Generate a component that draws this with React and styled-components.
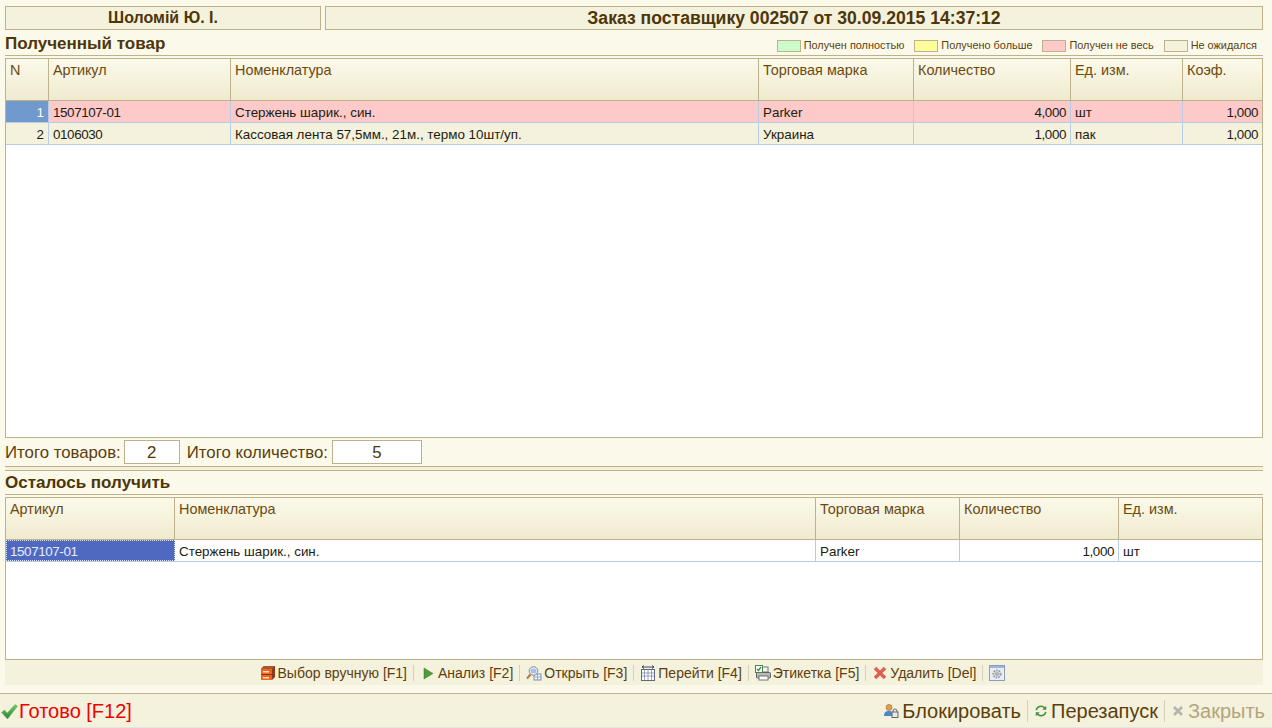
import styled, { createGlobalStyle } from 'styled-components';
import { Fragment } from 'react';

const GlobalStyle = createGlobalStyle`
    html, body {
        margin: 0;
        padding: 0;
        overflow: hidden;
        background: #fbf9ea;
    }
    * {
        box-sizing: border-box;
    }
`;

const receivedColumns = '43px 182px 528px 155px 157px 112px 1fr';
const leftColumns = '169px 641px 144px 159px 1fr';

const receivedHead = ['N', 'Артикул', 'Номенклатура', 'Торговая марка', 'Количество', 'Ед. изм.', 'Коэф.'];
const receivedRows = [
    { n: '1', code: '1507107-01', name: 'Стержень шарик., син.', brand: 'Parker', qty: '4,000', unit: 'шт', k: '1,000', bg: '#fdc9c9' },
    { n: '2', code: '0106030', name: 'Кассовая лента 57,5мм., 21м., термо 10шт/уп.', brand: 'Украина', qty: '1,000', unit: 'пак', k: '1,000', bg: '#f4f1dc' },
];
const leftHead = ['Артикул', 'Номенклатура', 'Торговая марка', 'Количество', 'Ед. изм.'];

const legend = [
    { label: 'Получен полностью', color: '#ccfccc' },
    { label: 'Получено больше', color: '#fdfd99' },
    { label: 'Получен не весь', color: '#fdc9c9' },
    { label: 'Не ожидался', color: '#f4f1dc' },
];

const DrawerIcon = () => (
    <svg width="16" height="16" viewBox="0 0 16 16">
        <path d="M4 1h11v11l-3 3H1V4z" fill="#8a3a1c" />
        <path d="M4 1h11l-3 3H1z" fill="#b0522a" />
        <rect x="1" y="4" width="11" height="5" fill="#f0641e" />
        <rect x="1" y="10" width="11" height="5" fill="#f0641e" />
        <rect x="3" y="6" width="6" height="1.5" fill="#ffe0c0" />
        <rect x="3" y="12" width="6" height="1.5" fill="#ffe0c0" />
    </svg>
);

const PlayIcon = () => (
    <svg width="16" height="16" viewBox="0 0 16 16">
        <path d="M4 3l9 5.5L4 14z" fill="#4f9a3a" stroke="#3b7d2c" strokeWidth="0.5" />
    </svg>
);

const SearchIcon = () => (
    <svg width="16" height="16" viewBox="0 0 16 16">
        <rect x="8" y="9" width="7" height="6" fill="#eef3fa" stroke="#7f93b5" />
        <path d="M11.5 9v6M8 12h7" stroke="#7f93b5" strokeWidth="0.7" />
        <circle cx="7.5" cy="6" r="4.3" fill="#dbe6f2" stroke="#8a8f98" />
        <path d="M5 5h5M5 7h5" stroke="#6f9ad0" />
        <path d="M4.5 9.5L1 13.5" stroke="#b07a4a" strokeWidth="2" />
    </svg>
);

const ColumnsIcon = () => (
    <svg width="16" height="16" viewBox="0 0 16 16">
        <rect x="1.5" y="4.5" width="13" height="11" fill="#fff" stroke="#5d6b82" />
        <path d="M4.5 5v10M8 5v10M11.5 5v10M2 8h12M2 11h12" stroke="#7d8ba3" strokeWidth="0.8" />
        <path d="M2 2h12M2 2l2-1.5M2 2l2 1.5M14 2l-2-1.5M14 2l-2 1.5" stroke="#3b4a60" fill="none" />
    </svg>
);

const PrinterIcon = () => (
    <svg width="16" height="16" viewBox="0 0 16 16">
        <rect x="5" y="2" width="8" height="5" fill="#f4f4f4" stroke="#777" />
        <rect x="1.5" y="7.5" width="14" height="5.5" rx="1" fill="#b9b9b9" stroke="#5f5f5f" />
        <rect x="4" y="11" width="9" height="4" fill="#fff" stroke="#777" />
        <rect x="0.5" y="0.5" width="7" height="7" fill="#fff" stroke="#4f7f4f" />
        <path d="M2 4l1.5 1.5L6 2" stroke="#2f9a2f" strokeWidth="1.3" fill="none" />
    </svg>
);

const DeleteIcon = () => (
    <svg width="16" height="16" viewBox="0 0 16 16">
        <path d="M3 3l10 10M13 3L3 13" stroke="#e0604e" strokeWidth="3.4" />
    </svg>
);

const SettingsIcon = () => (
    <svg width="16" height="16" viewBox="0 0 16 16">
        <rect x="0.5" y="0.5" width="15" height="15" fill="#e8eef7" stroke="#8b9dbb" />
        <rect x="1" y="1" width="14" height="2" fill="#9db6da" />
        <circle cx="8" cy="9" r="3.6" fill="none" stroke="#9a9a9a" strokeWidth="2" strokeDasharray="1.6 1" />
        <circle cx="8" cy="9" r="2.2" fill="#b5b5b5" />
    </svg>
);

const CheckIcon = () => (
    <svg width="17" height="17" viewBox="0 0 17 17">
        <defs>
            <linearGradient id="checkFill" x1="0" y1="0" x2="0" y2="1">
                <stop offset="0" stopColor="#6fce5a" />
                <stop offset="1" stopColor="#1c8a34" />
            </linearGradient>
        </defs>
        <path d="M0.5 9.5l3-2.5 2.7 3L14 1.5l2.5 1.8L6.5 16z" fill="url(#checkFill)" stroke="#8a9a8a" strokeWidth="0.5" />
    </svg>
);

const LockUserIcon = () => (
    <svg width="16" height="16" viewBox="0 0 16 16">
        <circle cx="6" cy="4.5" r="3" fill="#e0a050" stroke="#a06a28" strokeWidth="0.6" />
        <path d="M1 13c0-4 2-5 5-5 2 0 3 .6 3 2v3z" fill="#4a88c8" />
        <path d="M10 9V8a2 2 0 014 0v1" fill="none" stroke="#666" />
        <rect x="9" y="9" width="6" height="5.5" fill="#e8e8e8" stroke="#666" />
    </svg>
);

const RestartIcon = () => (
    <svg width="14" height="14" viewBox="0 0 16 16">
        <path d="M2.5 7a5.5 5.5 0 019.6-2.4" fill="none" stroke="#3f8f3f" strokeWidth="1.7" />
        <path d="M14 2v4.5H9.5z" fill="#3f8f3f" />
        <path d="M13.5 9a5.5 5.5 0 01-9.6 2.4" fill="none" stroke="#3f8f3f" strokeWidth="1.7" />
        <path d="M2 14V9.5h4.5z" fill="#3f8f3f" />
    </svg>
);

const CloseIcon = () => (
    <svg width="14" height="14" viewBox="0 0 14 14">
        <path d="M3 3l8 8M11 3l-8 8" stroke="#b4b4ac" strokeWidth="2.6" />
    </svg>
);

const tools = [
    { icon: <DrawerIcon />, label: 'Выбор вручную [F1]' },
    { icon: <PlayIcon />, label: 'Анализ [F2]' },
    { icon: <SearchIcon />, label: 'Открыть [F3]' },
    { icon: <ColumnsIcon />, label: 'Перейти [F4]' },
    { icon: <PrinterIcon />, label: 'Этикетка [F5]' },
    { icon: <DeleteIcon />, label: 'Удалить [Del]' },
];

const App = () => (
    <Page>
        <GlobalStyle />
        <TopBar>
            <NameBox>Шоломій Ю. І.</NameBox>
            <OrderBox>Заказ поставщику 002507 от 30.09.2015 14:37:12</OrderBox>
        </TopBar>

        <SectionHead>
            <SectionTitle>Полученный товар</SectionTitle>
            <Legend>
                {legend.map((item) => (
                    <LegendItem key={item.label}>
                        <Swatch color={item.color} />
                        {item.label}
                    </LegendItem>
                ))}
            </Legend>
        </SectionHead>

        <Table height={380}>
            <HeadRow columns={receivedColumns}>
                {receivedHead.map((title) => (
                    <HeadCell key={title}>{title}</HeadCell>
                ))}
            </HeadRow>
            {receivedRows.map((row, i) => (
                <BodyRow key={row.n} columns={receivedColumns}>
                    <Cell right bg={i === 0 ? '#7099ce' : '#f4f1dc'} color={i === 0 ? '#fff' : undefined}>{row.n}</Cell>
                    <NumberCell bg={row.bg}>{row.code}</NumberCell>
                    <Cell bg={row.bg}>{row.name}</Cell>
                    <Cell bg={row.bg}>{row.brand}</Cell>
                    <NumberCell right bg={row.bg}>{row.qty}</NumberCell>
                    <Cell bg={row.bg}>{row.unit}</Cell>
                    <NumberCell right bg={row.bg}>{row.k}</NumberCell>
                </BodyRow>
            ))}
        </Table>

        <Totals>
            <TotalLabel>Итого товаров:</TotalLabel>
            <TotalValue width={56}>2</TotalValue>
            <TotalLabel>Итого количество:</TotalLabel>
            <TotalValue width={90}>5</TotalValue>
        </Totals>
        <Splitter />

        <SectionHead second>
            <SectionTitle>Осталось получить</SectionTitle>
        </SectionHead>

        <Table height={163}>
            <HeadRow columns={leftColumns}>
                {leftHead.map((title) => (
                    <HeadCell key={title}>{title}</HeadCell>
                ))}
            </HeadRow>
            <BodyRow columns={leftColumns}>
                <SelectedCell>1507107-01</SelectedCell>
                <Cell>Стержень шарик., син.</Cell>
                <Cell>Parker</Cell>
                <NumberCell right>1,000</NumberCell>
                <Cell>шт</Cell>
            </BodyRow>
        </Table>

        <Toolbar>
            {tools.map((tool) => (
                <Fragment key={tool.label}>
                    <Tool>
                        {tool.icon}
                        {tool.label}
                    </Tool>
                    <ToolSep />
                </Fragment>
            ))}
            <Tool>
                <SettingsIcon />
            </Tool>
        </Toolbar>

        <BottomBar>
            <ReadyButton>
                <CheckIcon />
                Готово [F12]
            </ReadyButton>
            <BottomActions>
                <BottomButton>
                    <LockUserIcon />
                    Блокировать
                </BottomButton>
                <BottomSep />
                <BottomButton>
                    <RestartIcon />
                    Перезапуск
                </BottomButton>
                <BottomSep />
                <BottomButton disabled>
                    <CloseIcon />
                    Закрыть
                </BottomButton>
            </BottomActions>
        </BottomBar>
    </Page>
);

export default App;

const Page = styled.div`
    display: flex;
    flex-direction: column;
    width: 1272px;
    height: 728px;
    padding-top: 6px;
    background: #fbf9ea;
    font-family: 'Liberation Sans', Arial, sans-serif;
    color: #5c3f0c;
    overflow: hidden;
`;

const TopBar = styled.div`
    display: flex;
    gap: 4px;
    margin: 0 9px 0 5px;
    height: 24px;
`;

const TitleBox = styled.div`
    display: flex;
    align-items: center;
    justify-content: center;
    border: 1px solid #bdb28b;
    background: #f4f1dc;
    font-weight: bold;
    color: #4d3608;
`;

const NameBox = styled(TitleBox)`
    width: 316px;
    font-size: 16px;
`;

const OrderBox = styled(TitleBox)`
    flex: 1;
    font-size: 17.6px;
`;

const SectionHead = styled.div`
    display: flex;
    flex-shrink: 0;
    align-items: flex-end;
    justify-content: space-between;
    margin: ${(props) => (props.second ? '0' : '2px')} 9px 2px 5px;
    height: 24px;
    padding-bottom: 1px;
    border-bottom: 1px solid #bdb28b;
`;

const SectionTitle = styled.h2`
    margin: 0;
    font-size: 17px;
    line-height: 20px;
    font-weight: bold;
    color: #4d3608;
`;

const Legend = styled.div`
    display: flex;
    gap: 10px;
    margin-right: 6px;
    margin-bottom: 2px;
`;

const LegendItem = styled.div`
    display: flex;
    align-items: center;
    gap: 3px;
    font-size: 10.9px;
    line-height: 13px;
    color: #5c3f0c;
`;

const Swatch = styled.span`
    width: 24px;
    height: 12px;
    border: 1px solid #bdb28b;
    background: ${(props) => props.color};
`;

const Table = styled.div`
    flex-shrink: 0;
    margin: 0 9px 0 5px;
    height: ${(props) => props.height}px;
    border: 1px solid #bdb28b;
    background: #fff;
    overflow: hidden;
`;

const HeadRow = styled.div`
    display: grid;
    grid-template-columns: ${(props) => props.columns};
    height: 42px;
    border-bottom: 1px solid #bdb28b;
    background: linear-gradient(#fbf9ea, #f0ebcf);
`;

const HeadCell = styled.div`
    padding: 4px 4px 0;
    border-right: 1px solid #bdb28b;
    font-size: 14.4px;
    line-height: 15px;
    color: #6b4a10;
    white-space: nowrap;

    &:last-child {
        border-right: 0;
    }
`;

const BodyRow = styled.div`
    display: grid;
    grid-template-columns: ${(props) => props.columns};
    height: 22px;
    border-bottom: 1px solid #b6cde6;
`;

const Cell = styled.div`
    padding: 1px 4px 0;
    border-right: 1px solid #b6cde6;
    background: ${(props) => props.bg || '#fff'};
    color: ${(props) => props.color || '#1c1c10'};
    font-size: 13.4px;
    line-height: 21px;
    text-align: ${(props) => (props.right ? 'right' : 'left')};
    white-space: nowrap;
    overflow: hidden;

    &:last-child {
        border-right: 0;
    }
`;

const NumberCell = styled(Cell)`
    letter-spacing: -0.4px;
`;

const SelectedCell = styled(NumberCell)`
    background: #4f69c0;
    color: #e8ecff;
    border: 1px dotted #dfe4f5;
    padding: 1px 3px 0;
    line-height: 19px;
`;

const Totals = styled.div`
    display: flex;
    flex-shrink: 0;
    align-items: center;
    gap: 3px;
    height: 24px;
    margin: 2px 9px 0 5px;
`;

const TotalLabel = styled.span`
    padding-top: 1px;
    font-size: 16.8px;
    color: #5c3f0c;

    & ~ & {
        margin: 0 1px 0 4px;
    }
`;

const TotalValue = styled.div`
    width: ${(props) => props.width}px;
    height: 24px;
    border: 1px solid #bdb28b;
    background: #fff;
    font-size: 16.8px;
    line-height: 23px;
    text-align: center;
    color: #4d3608;
`;

const Splitter = styled.div`
    flex-shrink: 0;
    height: 5px;
    margin: 2px 9px 0 5px;
    border-top: 1px solid #bdb28b;
    border-bottom: 1px solid #bdb28b;
    background: #f4f1dc;
`;

const Toolbar = styled.div`
    display: flex;
    flex-shrink: 0;
    align-items: center;
    justify-content: center;
    height: 25px;
    margin: 0 9px 0 5px;
    padding-right: 3px;
    background: #f4f1dc;
    font-size: 14px;
    color: #5c3f0c;
`;

const Tool = styled.div`
    display: flex;
    align-items: center;
    gap: 2px;
    white-space: nowrap;
`;

const ToolSep = styled.span`
    width: 1px;
    height: 16px;
    margin: 0 6px;
    background: #d5d0b8;
`;

const BottomBar = styled.div`
    display: flex;
    flex-shrink: 0;
    align-items: center;
    justify-content: space-between;
    height: 35px;
    margin-top: 8px;
    padding: 1px 7px 0 1px;
    border-top: 1px solid #bdb28b;
    border-bottom: 1px solid #e6e6e0;
    background: #f4f1dc;
`;

const ReadyButton = styled.div`
    display: flex;
    align-items: center;
    gap: 1px;
    font-size: 20px;
    color: #f00000;
`;

const BottomActions = styled.div`
    display: flex;
    align-items: center;
`;

const BottomButton = styled.div`
    display: flex;
    align-items: center;
    gap: 3px;
    font-size: 20px;
    color: ${(props) => (props.disabled ? '#b3a57c' : '#5c3f0c')};
`;

const BottomSep = styled.span`
    width: 1px;
    height: 22px;
    margin: 0 6px;
    background: #d5d0b8;
`;
